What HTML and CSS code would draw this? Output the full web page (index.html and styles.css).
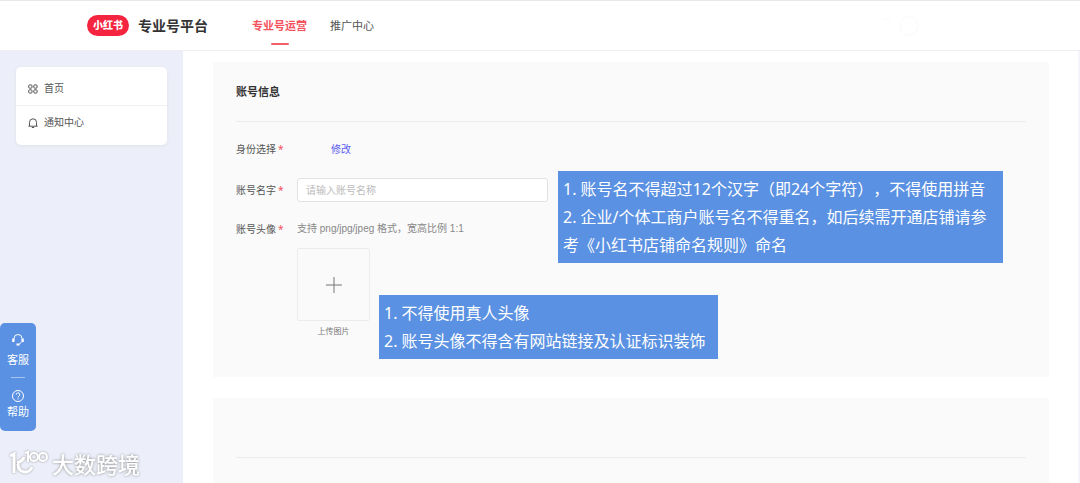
FILE: index.html
```
<!DOCTYPE html>
<html lang="zh-CN">
<head>
  <meta charset="UTF-8">
  <meta name="viewport" content="width=device-width, initial-scale=1.0">
  <title>专业号平台</title>
  <link rel="stylesheet" href="styles.css">
</head>
<body>

  <header class="header">
    <span class="logo">小红书</span>
    <h1>专业号平台</h1>
    <nav class="nav">
      <a href="#" class="active">专业号运营</a>
      <a href="#">推广中心</a>
    </nav>
    <svg class="avatar" width="40" height="24" viewBox="0 0 40 24">
      <path d="M3 5h9"/>
      <circle cx="29" cy="12" r="9"/>
    </svg>
  </header>

  <div class="page">
    <aside class="sidebar">
      <nav class="menu">
        <a href="#">
          <svg width="10" height="10" viewBox="0 0 10 10">
            <rect x="0.7" y="0.9" width="3.3" height="3.3" rx="1"/>
            <rect x="5.8" y="0.9" width="3.3" height="3.3" rx="1"/>
            <rect x="0.7" y="5.8" width="3.3" height="3.3" rx="1"/>
            <rect x="5.8" y="5.8" width="3.3" height="3.3" rx="1"/>
          </svg>
          首页
        </a>
        <a href="#">
          <svg width="10" height="10" viewBox="0 0 10 10">
            <path d="M0.4 8.2h9.2M1.5 8V4.300a3.500 3.500 0 0 1 7 0V8M3.800 9.500h2.400"/>
          </svg>
          通知中心
        </a>
      </nav>
    </aside>

    <main class="content">
      <form class="card">
        <h2>账号信息</h2>

        <div class="row">
          <span class="label">身份选择<i>*</i></span>
          <div class="field"><a href="#" class="edit">修改</a></div>
        </div>

        <div class="row">
          <label class="label" for="accountName">账号名字<i>*</i></label>
          <div class="field">
            <input type="text" id="accountName" placeholder="请输入账号名称">
            <div class="note note-name">
              1. 账号名不得超过12个汉字（即24个字符），不得使用拼音<br>
              2. 企业/个体工商户账号名不得重名，如后续需开通店铺请参考《小红书店铺命名规则》命名
            </div>
          </div>
        </div>

        <div class="row row-top">
          <span class="label">账号头像<i>*</i></span>
          <div class="field">
            <p class="hint">支持 png/jpg/jpeg 格式，宽高比例 1:1</p>
            <button type="button" class="upload" aria-label="上传图片">
              <svg width="18" height="18" viewBox="0 0 18 18"><path d="M9 1v16M1 9h16"/></svg>
            </button>
            <div class="caption">上传图片</div>
            <div class="note note-avatar">
              1. 不得使用真人头像<br>
              2. 账号头像不得含有网站链接及认证标识装饰
            </div>
          </div>
        </div>
      </form>

      <section class="card card-next">
        <h2></h2>
      </section>
    </main>
  </div>

  <div class="float-bar">
    <a href="#">
      <svg width="14" height="14" viewBox="0 0 14 14">
        <path d="M3 8.500V5.500a4 4 0 0 1 8 0v3L8 11.500"/>
        <path class="thick" d="M2.200 5.500v3.500M11.800 5.500v3.500M5.500 11.500h3"/>
      </svg>
      客服
    </a>
    <hr>
    <a href="#">
      <svg width="14" height="14" viewBox="0 0 14 14">
        <circle cx="7" cy="7" r="5.500"/>
        <path d="M5.200 5.700a1.800 1.800 0 1 1 2.700 1.500c-.7.400-.9.700-.9 1.300M7 9.500v1"/>
      </svg>
      帮助
    </a>
  </div>

  <div class="watermark">
    <svg width="40" height="30" viewBox="0 0 40 30">
      <path class="bold" d="M2 7l4-2v19M16 8c-1 3-4 5-7 6M10 15c0 9 11 11 14 3"/>
      <path d="M17 4l3-1v10"/>
      <circle cx="26" cy="8" r="4"/>
      <circle cx="35" cy="8" r="4"/>
    </svg>
    <span>大数跨境</span>
  </div>

</body>
</html>
```

FILE: styles.css
```
* {
  box-sizing: border-box;
}

body {
  display: flex;
  flex-direction: column;
  min-height: 100vh;
  margin: 0;
  background-color: #fff;
  color: #555;
  font-family: "Noto Sans", "Noto Sans CJK SC", sans-serif;
  font-size: 10px;
}

a {
  color: inherit;
  text-decoration: none;
}

svg {
  fill: none;
  stroke: currentColor;
}

/* header */
.header {
  display: flex;
  align-items: center;
  height: 51px;
  padding: 0 160px 0 87px;
  border-top: 1px solid #e8e8e8;
  border-bottom: 1px solid #eeeef4;
}

.logo {
  width: 42px;
  border-radius: 11px;
  background-color: #f5243f;
  color: #fff;
  font-size: 10px;
  font-weight: 900;
  line-height: 21px;
  text-align: center;
}

.header h1 {
  margin: 0 44px 0 9px;
  color: #333;
  font-size: 14px;
  line-height: 20px;
}

.nav {
  display: flex;
  flex: 1;
  gap: 23px;
  font-size: 11px;
  line-height: 49px;
}

.nav .active {
  position: relative;
  color: #f4525c;
  font-weight: bold;
}

.nav .active::after {
  content: "";
  position: absolute;
  left: 50%;
  bottom: 5px;
  width: 18px;
  height: 2px;
  margin-left: -9px;
  border-radius: 1px;
  background-color: #f4606a;
}

.avatar {
  color: #fafafa;
}

/* sidebar */
.page {
  display: flex;
  flex: 1;
  border-right: 2px solid #f4f5fb;
}

.sidebar {
  width: 183px;
  padding: 16px;
  background-color: #eceff9;
}

.menu {
  padding: 5px 0 6px;
  border-radius: 5px;
  background-color: #fff;
  box-shadow: 0 1px 4px #dfe2ec;
}

.menu a {
  display: flex;
  align-items: center;
  gap: 6px;
  padding-left: 12px;
  line-height: 33px;
}

.menu a + a {
  border-top: 1px solid #f0f0f0;
}

/* content */
.content {
  display: flex;
  flex: 1;
  flex-direction: column;
  gap: 21px;
  padding: 11px 29px 0 30px;
}

.card {
  padding: 0 23px 40px;
  background-color: #fafafa;
}

.card-next {
  flex: 1;
  padding-bottom: 24px;
}

.card h2 {
  height: 60px;
  margin: 0 0 16px;
  border-bottom: 1px solid #ececec;
  color: #333;
  font-size: 11px;
  line-height: 60px;
}

.card-next h2 {
  margin: 0;
}

.row {
  display: flex;
  align-items: center;
  min-height: 22px;
  margin-bottom: 18px;
  line-height: 18px;
}

.row-top {
  align-items: flex-start;
  margin-bottom: 0;
}

.label {
  width: 61px;
}

.label i {
  margin-left: 2px;
  color: #f4525c;
  font-style: normal;
}

.field {
  position: relative;
}

.edit {
  margin-left: 34px;
  color: #5a5cf0;
}

.field input {
  display: block;
  width: 251px;
  height: 24px;
  padding: 0 8px;
  border: 1px solid #e2e2e2;
  border-radius: 3px;
  background-color: #fff;
  font: inherit;
}

.field input::placeholder {
  color: #bbb;
}

.hint {
  margin: 0;
  color: #888;
  font-family: "Liberation Sans", "Noto Sans CJK SC", sans-serif;
}

.upload {
  display: flex;
  align-items: center;
  justify-content: center;
  width: 73px;
  height: 73px;
  margin-top: 10px;
  padding: 0;
  border: 1px solid #ececec;
  border-radius: 2px;
  background-color: #fafafa;
  color: #777;
  cursor: pointer;
}

.caption {
  width: 73px;
  margin-top: 4px;
  color: #777;
  font-size: 8px;
  line-height: 12px;
  text-align: center;
}

/* blue notes lie over the form */
.note {
  position: absolute;
  padding: 4px 5px;
  background-color: #5a91e2;
  color: #fff;
  font-size: 16px;
  line-height: 28px;
  text-spacing-trim: space-all;
}

.note-name {
  top: -7px;
  left: 261px;
  width: 445px;
}

.note-avatar {
  top: 75px;
  left: 82px;
  width: 339px;
}

/* service bar */
.float-bar {
  position: fixed;
  bottom: 52px;
  left: 0;
  width: 36px;
  padding: 10px 0;
  border-radius: 5px;
  background-color: #5a91e2;
  color: #fff;
  font-size: 11px;
  line-height: 18px;
  text-align: center;
}

.float-bar svg {
  display: block;
  margin: 0 auto 4px;
}

.float-bar a + hr + a svg {
  margin-bottom: 0;
}

.float-bar .thick {
  stroke-width: 2;
}

.float-bar hr {
  width: 14px;
  height: 1px;
  margin: 8px auto 11px;
  border: 0;
  background-color: #a5c4f2;
}

.watermark {
  position: fixed;
  bottom: 4px;
  left: 8px;
  display: flex;
  align-items: center;
  gap: 4px;
  color: #fff;
  font-size: 22px;
  font-weight: 500;
  line-height: 30px;
  text-shadow: 0 0 3px #888;
}

.watermark svg {
  stroke-width: 2;
  filter: drop-shadow(0 0 1px #999);
}

.watermark .bold {
  stroke-width: 3;
}
```
